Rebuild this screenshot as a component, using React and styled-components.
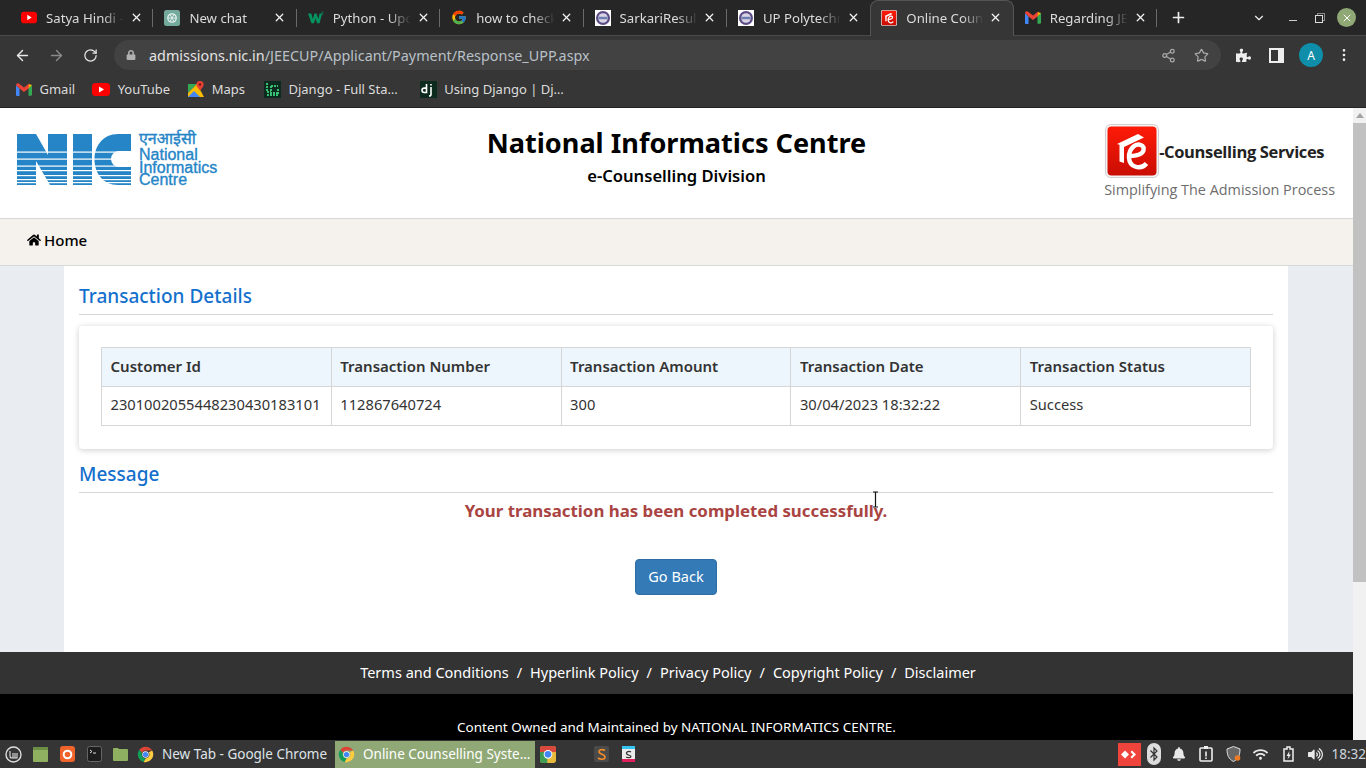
import React from 'react';
import styled, { createGlobalStyle } from 'styled-components';
import { FaHome, FaPuzzlePiece, FaBell, FaLock, FaVolumeUp, FaWifi } from 'react-icons/fa';
import { FcGoogle } from 'react-icons/fc';
import { ArrowLeft, ArrowRight, RotateCw, Share2, Star, MoreVertical, X, Plus, ChevronDown } from 'lucide-react';

const GlobalStyle = createGlobalStyle`
  html, body { margin: 0; padding: 0; height: 100%; overflow: hidden; }
  body { font-family: "Noto Sans", "Open Sans", sans-serif; }
  * { box-sizing: border-box; }
`;

const Screen = styled.div`
  width: 1366px;
  height: 768px;
  display: flex;
  flex-direction: column;
  overflow: hidden;
`;

/* browser chrome */
const TabStrip = styled.div`
  height: 36px;
  background: #262626;
  border-bottom: 1px solid #4a4a4a;
  display: flex;
  align-items: stretch;
  padding-left: 10px;
  color: #dcdcdc;
  font-size: 13.2px;
  flex: none;
`;

const Tab = styled.div`
  width: 143.4px;
  height: ${({ $active }) => ($active ? '36px' : '35px')};
  flex: none;
  display: flex;
  align-items: center;
  padding: ${({ $active }) => ($active ? '0 8px 2px 10px' : '0 8px 0 11px')};
  position: relative;
  background: ${({ $active }) => ($active ? '#363636' : 'transparent')};
  border: ${({ $active }) => ($active ? '1px solid #555' : 'none')};
  border-bottom: none;
  border-radius: 8px 8px 0 0;
  &::after {
    content: '';
    display: ${({ $sep }) => ($sep ? 'block' : 'none')};
    position: absolute;
    right: 0;
    top: 9px;
    height: 18px;
    width: 1px;
    background: #6a6a6a;
  }
`;

const TabIcon = styled.span`
  width: 16px;
  height: 16px;
  flex: none;
  display: flex;
  align-items: center;
  justify-content: center;
`;

const TabTitle = styled.span`
  margin: 0 3px 0 9px;
  flex: 1;
  min-width: 0;
  overflow: hidden;
  white-space: nowrap;
  -webkit-mask-image: linear-gradient(90deg, #000 72%, transparent 100%);
  mask-image: linear-gradient(90deg, #000 72%, transparent 100%);
`;

const TabClose = styled.span`
  width: 18px;
  flex: none;
  display: flex;
  justify-content: center;
  color: #f2f2f2;
`;

const StripAction = styled.span`
  display: flex;
  align-items: center;
  color: #eee;
  margin-left: ${({ $gap }) => $gap}px;
`;

const MinimizeGlyph = styled.span`
  display: block;
  width: 8px;
  height: 1px;
  margin-top: 5px;
  background: #ccc;
`;

const RestoreGlyph = styled.span`
  display: block;
  width: 8px;
  height: 8px;
  margin-top: 2px;
  border: 1px solid #ddd;
  box-shadow: 2px -2px 0 -1px #262626, 2px -2px 0 0 #888;
`;

const CloseDot = styled.span`
  width: 19px;
  height: 19px;
  border-radius: 50%;
  background: #8fa876;
  color: #fff;
  display: flex;
  align-items: center;
  justify-content: center;
`;

const Toolbar = styled.div`
  height: 35px;
  background: #363636;
  display: flex;
  align-items: center;
  padding: 3px 0 0 14px;
  color: #d8d8d8;
  flex: none;
`;

const NavButton = styled.span`
  width: 17px;
  display: flex;
  justify-content: center;
  margin-right: 17px;
  color: ${({ $dim }) => ($dim ? '#8a8a8a' : '#e6e6e6')};
`;

const Omnibox = styled.div`
  width: 1107px;
  height: 30px;
  margin-left: -2px;
  background: #424242;
  border-radius: 15px;
  display: flex;
  align-items: center;
  padding: 0 12px 0 12px;
  font-size: 14.36px;
  color: #b9c0c8;
`;

const UrlHost = styled.span`
  color: #e4e4e4;
`;

const UrlText = styled.span`
  margin-left: 13px;
  flex: 1;
`;

const OmniIcon = styled.span`
  display: flex;
  color: #a8a8a8;
  margin-left: 18px;
`;

const ToolIcons = styled.div`
  display: flex;
  align-items: center;
  color: #eee;
`;

const SidePanelIcon = styled.span`
  display: block;
  width: 15px;
  height: 15px;
  background: #363636;
  border: 2px solid #eee;
  border-right-width: 6px;
`;

const Avatar = styled.span`
  width: 24px;
  height: 24px;
  border-radius: 50%;
  background: #0e8ea8;
  color: #fff;
  font-size: 12px;
  display: flex;
  align-items: center;
  justify-content: center;
`;

const Bookmarks = styled.div`
  height: 37px;
  background: #363636;
  border-bottom: 1px solid #222;
  display: flex;
  align-items: center;
  padding-left: 16px;
  color: #dcdcdc;
  font-size: 13px;
  flex: none;
`;

const Bookmark = styled.span`
  display: flex;
  align-items: center;
  gap: 7.5px;
  margin-right: ${({ $gap }) => $gap}px;
  white-space: nowrap;
`;

/* page */
const Viewport = styled.div`
  flex: 1;
  min-height: 0;
  display: flex;
`;

const Page = styled.div`
  flex: 1;
  min-width: 0;
  display: flex;
  flex-direction: column;
  background: #e9ecf1;
`;

const Scrollbar = styled.div`
  width: 13px;
  flex: none;
  background: #f1f1f1;
  display: flex;
  flex-direction: column;
  align-items: stretch;
  padding-top: 15px;
  position: relative;
  &::before {
    content: '';
    position: absolute;
    top: 5px;
    left: 3px;
    border: 4px solid transparent;
    border-top: 0;
    border-bottom: 5px solid #a3a3a3;
  }
`;

const ScrollThumb = styled.div`
  height: 459px;
  background: #c1c1c1;
`;

const Header = styled.header`
  height: 111px;
  background: #fff;
  border-bottom: 1px solid #d8d8d8;
  display: grid;
  grid-template-columns: 1fr auto 1fr;
  align-items: start;
  flex: none;
`;

const NicLogo = styled.div`
  display: flex;
  padding: 26px 0 0 17px;
  color: #2585c7;
`;

const NicWords = styled.div`
  margin-left: 8px;
  margin-top: -2px;
  font-family: "Liberation Sans", sans-serif;
  font-size: 16px;
  line-height: 12.7px;
  -webkit-text-stroke: 0.35px #2585c7;
`;

const NicHindi = styled.div`
  font-family: "Noto Sans Devanagari", "Noto Sans", sans-serif;
  font-size: 16px;
  line-height: 17px;
`;

const TitleBlock = styled.div`
  text-align: center;
  color: #000;
  padding-top: 15px;
`;

const SiteTitle = styled.h1`
  margin: 0;
  font-size: 27.1px;
  line-height: 40px;
  font-weight: 700;
`;

const SiteSub = styled.div`
  font-size: 16.6px;
  line-height: 26px;
  font-weight: 600;
`;

const ServiceLogo = styled.div`
  justify-self: end;
  padding: 15px 18px 0 0;
  display: flex;
  flex-direction: column;
  align-items: flex-start;
  font-family: "Open Sans", sans-serif;
`;

const ServiceTop = styled.div`
  display: flex;
  align-items: center;
  margin-left: 1px;
  height: 55px;
`;

const ServiceName = styled.span`
  font-size: 16.5px;
  font-weight: 700;
  color: #222;
  letter-spacing: -0.35px;
  margin-top: 2px;
`;

const ServiceTag = styled.span`
  font-size: 14.4px;
  color: #6d6d6d;
  line-height: 20px;
  margin-top: 2px;
  white-space: nowrap;
`;

const NavBar = styled.nav`
  height: 47px;
  background: #f5f1ec;
  border-bottom: 1px solid #d8d8d8;
  display: flex;
  align-items: center;
  padding: 0 0 4px 27px;
  font-size: 15px;
  font-weight: 500;
  color: #000;
  flex: none;
`;

const HomeLink = styled.a`
  display: flex;
  align-items: center;
  gap: 3px;
`;

const Container = styled.main`
  width: 1224px;
  margin-left: 64px;
  flex: 1;
  min-height: 0;
  background: #fff;
  padding: 15px 15px 0;
  color: #333;
`;

const SectionTitle = styled.h2`
  margin: 0;
  font-size: 19px;
  line-height: 31px;
  padding-bottom: 2px;
  font-weight: 500;
  color: #1470cc;
  border-bottom: 1px solid #d6d6d6;
`;

const Card = styled.div`
  margin-top: 11px;
  margin-bottom: 10px;
  padding: 21px 22px 23px;
  background: #fff;
  border-radius: 4px;
  box-shadow: 0 1px 6px rgba(0, 0, 0, 0.2);
`;

const Table = styled.table`
  width: 100%;
  table-layout: fixed;
  border-collapse: collapse;
`;

const Th = styled.th`
  height: 39px;
  padding: 0 8px 2px 8.5px;
  text-align: left;
  font-size: 15px;
  font-weight: 600;
  background: #eef6fd;
  border: 1px solid #d6d6d6;
`;

const Td = styled.td`
  height: 39px;
  padding: 0 8px 5px 8.5px;
  font-size: 14.7px;
  border: 1px solid #d6d6d6;
  white-space: nowrap;
`;

const SuccessText = styled.p`
  margin: 6px 0 0;
  text-align: center;
  font-size: 16.85px;
  line-height: 24px;
  font-weight: 700;
  color: #a94442;
`;

const ButtonRow = styled.div`
  display: flex;
  justify-content: center;
  margin-top: 36px;
`;

const GoBack = styled.button`
  width: 82px;
  height: 36px;
  padding: 0 0 2px;
  background: #337ab7;
  border: 1px solid #2e6da4;
  border-radius: 4px;
  color: #fff;
  font: 400 14.5px "Noto Sans", sans-serif;
`;

const Cursor = styled.span`
  position: absolute;
  left: 872px;
  top: 491px;
  width: 7px;
  height: 17px;
  display: block;
`;

const FooterLinks = styled.div`
  height: 42px;
  padding: 0 17px 2px 0;
  background: #333;
  color: #fff;
  display: flex;
  justify-content: center;
  align-items: center;
  font-size: 14.5px;
  flex: none;
`;

const FooterSep = styled.span`
  margin: 0 8px;
`;

const FooterOwner = styled.div`
  height: 46px;
  background: #000;
  color: #fff;
  text-align: center;
  font-size: 13.46px;
  padding-top: 24px;
  line-height: 18px;
  flex: none;
`;

/* desktop panel */
const Taskbar = styled.div`
  height: 28px;
  background: #353535;
  display: flex;
  align-items: center;
  color: #dfe3e8;
  font-size: 13.5px;
  flex: none;
`;

const PanelSlot = styled.span`
  width: ${({ $w }) => $w}px;
  height: 28px;
  flex: none;
  display: flex;
  align-items: center;
  justify-content: center;
`;

const TaskWindow = styled.div`
  width: ${({ $w }) => $w}px;
  height: 27px;
  flex: none;
  display: flex;
  align-items: center;
  padding-left: 3px;
  gap: 8px;
  white-space: nowrap;
  overflow: hidden;
  background: ${({ $active }) => ($active ? '#8fa876' : 'transparent')};
  color: ${({ $active }) => ($active ? '#fff' : '#dfe3e8')};
`;

const PanelSpacer = styled.div`
  flex: 1;
`;

const TrayIcon = styled.span`
  width: ${({ $w }) => $w}px;
  flex: none;
  display: flex;
  justify-content: center;
  color: #e8e8e8;
`;

const Clock = styled.span`
  margin-left: 3px;
  color: #cfd6dd;
  font-size: 13.5px;
`;

const ChromeIcon = ({ size = 16 }) => (
  <svg width={size} height={size} viewBox="0 0 48 48">
    <path fill="#db4437" d="M24 2a22 22 0 0 1 19 11H24a11 11 0 0 0-10 6.5L6.6 10.5A22 22 0 0 1 24 2z" />
    <path fill="#0f9d58" d="M6.6 10.500 14 19.500A11 11 0 0 0 24.500 35l-5.500 10A22 22 0 0 1 6.600 10.500z" />
    <path fill="#ffcd40" d="M43 13a22 22 0 0 1-24 32l5.500-10A11 11 0 0 0 33 17.500L43 13z" />
    <circle cx="24" cy="24" r="9" fill="#fff" />
    <circle cx="24" cy="24" r="7.400" fill="#4285f4" />
  </svg>
);

const ChromeTile = () => (
  <svg width="16" height="17" viewBox="0 0 48 51">
    <rect width="48" height="51" rx="8" fill="#e8b93a" />
    <path d="M0 8a8 8 0 0 1 8-8h32a8 8 0 0 1 8 8v10H0z" fill="#d9493c" />
    <path d="M0 18h22v33H8a8 8 0 0 1-8-8z" fill="#3f9d55" />
    <circle cx="24" cy="25" r="13" fill="#fff" />
    <circle cx="24" cy="25" r="10" fill="#4285f4" />
  </svg>
);

const YoutubeIcon = () => (
  <svg width="18" height="13" viewBox="0 0 18 13">
    <rect width="18" height="13" rx="3.500" fill="#f00" />
    <path d="M7 3.500v6l5-3z" fill="#fff" />
  </svg>
);

const GmailIcon = () => (
  <svg width="16" height="13" viewBox="0 0 16 13">
    <path d="M0 2v9.500A1.200 1.200 0 0 0 1.200 13H3.500V5.500z" fill="#4285f4" />
    <path d="M16 2v9.500a1.200 1.200 0 0 1-1.200 1.200h-2.300V5.500z" fill="#34a853" />
    <path d="M12.500 1 16 2v0l-3.500 3.500L11 4z" fill="#fbbc04" />
    <path d="M0 2C0 .5 1.600-.4 2.800.5L8 4.600 13.200.5 12.500 5.500 8 9 3.500 5.500z" fill="#ea4335" />
  </svg>
);

const ChatGptIcon = () => (
  <svg width="16" height="16" viewBox="0 0 16 16">
    <rect width="16" height="16" rx="2.500" fill="#74aa9c" />
    <circle cx="8" cy="8" r="4.200" fill="none" stroke="#e8f3f0" strokeWidth="1.300" />
    <path d="M6 4.500 10 11.500M10 4.500 6 11.500M4 8h8" stroke="#e8f3f0" strokeWidth=".9" />
  </svg>
);

const W3Icon = () => (
  <svg width="18" height="14" viewBox="0 0 18 14">
    <path d="M0 2h3.800l1.600 6L7.300 2h2.300l2 6 1.400-6h2.800l-2.800 11h-2.800L8.400 7.500 6.700 13H3.900z" fill="#04925f" />
    <path d="M15 .5h2.200l-1 1.200c1.200.3.800 2-.8 1.600" fill="none" stroke="#04925f" strokeWidth=".7" />
  </svg>
);

const SealIcon = () => (
  <svg width="16" height="16" viewBox="0 0 16 16">
    <rect width="16" height="16" fill="#fff" />
    <circle cx="8" cy="8" r="7" fill="#5b4a86" />
    <circle cx="8" cy="8" r="4.800" fill="#d8d4e4" />
    <rect x="3.600" y="6.800" width="8.800" height="2.400" fill="#6c7fb0" />
  </svg>
);

const CounsellingMark = ({ size = 16, gradientId = 'mark-red' }) => (
  <svg width={size} height={size} viewBox="0 0 54 54">
    <defs>
      <linearGradient id={gradientId} x1="0" y1="0" x2="0" y2="1">
        <stop offset="0" stopColor="#ff1a08" />
        <stop offset="1" stopColor="#c90d03" />
      </linearGradient>
    </defs>
    <rect x=".5" y=".5" width="53" height="53" rx="5" fill="#f3f3f3" stroke="#d0d0d0" />
    <rect x="2.500" y="2.500" width="49" height="49" rx="4" fill={`url(#${gradientId})`} />
    <path d="M12 20 33 10l6 3.500L19 23v16l-4.500-1.500V20.800z" fill="#fff" />
    <path d="M23 31c5 2 14 0 15.500-4.500C40 21 33 18.500 28.500 22.500 22 28 22.500 40 30 42.500c4.500 1.500 9 0 11.500-3" fill="none" stroke="#fff" strokeWidth="4.400" />
  </svg>
);

const DjangoSquare = () => (
  <svg width="17" height="17" viewBox="0 0 17 17">
    <rect width="17" height="17" fill="#0c2a1e" />
    <path d="M3 2v9h4M7 5h7M7 5v7h7M14 8v6H3" fill="none" stroke="#38c172" strokeWidth="2" strokeDasharray="2 1" />
  </svg>
);

const DjIcon = () => (
  <svg width="17" height="17" viewBox="0 0 17 17">
    <rect width="17" height="17" fill="#0c2a1e" />
    <path d="M6.500 3v8.500H4.200a2.200 2.200 0 0 1 0-4.400H6.500M11 6v7.500c0 1-.7 1.500-2 1.500M11 3v1.500" fill="none" stroke="#fff" strokeWidth="1.600" />
  </svg>
);

const MapsIcon = () => (
  <svg width="16" height="16" viewBox="0 0 16 16">
    <path d="M0 3h9l-9 9z" fill="#34a853" />
    <path d="M0 12 9 3l7 13H0z" fill="#fbbc04" />
    <path d="M0 16l6-6 6 6z" fill="#4285f4" />
    <path d="M12 0a3.600 3.600 0 0 1 3.600 3.600C15.600 6 12 9.500 12 9.500S8.400 6 8.400 3.600A3.600 3.600 0 0 1 12 0z" fill="#ea4335" />
    <circle cx="12" cy="3.600" r="1.300" fill="#7b1c14" />
  </svg>
);

const NicMark = () => (
  <svg width="114" height="51" viewBox="0 0 114 51">
    <path d="M0 0h19l12 21V0h19v51H33L19 27v24H0z" fill="#2585c7" />
    <rect x="56" y="0" width="19" height="51" fill="#2585c7" />
    <path d="M114 0H101C86 0 77.500 12 77.500 25.500S86 51 101 51h13V33H102a7.500 7.500 0 0 1 0-16h12z" fill="#2585c7" />
    {[17.500, 24.500, 31.500, 36, 41, 45, 48].map((y) => (
      <rect key={y} x="0" y={y} width="114" height="1.200" fill="#fff" />
    ))}
  </svg>
);

const tabs = [
  { title: 'Satya Hindi - YouTube', icon: <YoutubeIcon />, sep: true },
  { title: 'New chat', icon: <ChatGptIcon />, sep: true },
  { title: 'Python - Update', icon: <W3Icon />, sep: true },
  { title: 'how to check', icon: <FcGoogle size={17} />, sep: true },
  { title: 'SarkariResult', icon: <SealIcon />, sep: true },
  { title: 'UP Polytechnic', icon: <SealIcon /> },
  { title: 'Online Counselling', icon: <CounsellingMark gradientId="tab-red" />, active: true },
  { title: 'Regarding JEE', icon: <GmailIcon />, sep: true },
];

const bookmarks = [
  { label: 'Gmail', icon: <GmailIcon />, gap: 17 },
  { label: 'YouTube', icon: <YoutubeIcon />, gap: 18 },
  { label: 'Maps', icon: <MapsIcon />, gap: 19 },
  { label: 'Django - Full Sta…', icon: <DjangoSquare />, gap: 22 },
  { label: 'Using Django | Dj…', icon: <DjIcon />, gap: 0 },
];

const columns = ['Customer Id', 'Transaction Number', 'Transaction Amount', 'Transaction Date', 'Transaction Status'];
const values = ['2301002055448230430183101', '112867640724', '300', '30/04/2023 18:32:22', 'Success'];
const footerLinks = ['Terms and Conditions', 'Hyperlink Policy', 'Privacy Policy', 'Copyright Policy', 'Disclaimer'];

const App = () => {
  return (
    <Screen>
      <GlobalStyle />
      <TabStrip>
        {tabs.map((tab) => (
          <Tab key={tab.title} $active={tab.active} $sep={tab.sep}>
            <TabIcon>{tab.icon}</TabIcon>
            <TabTitle>{tab.title}</TabTitle>
            <TabClose><X size={13} strokeWidth={2.4} /></TabClose>
          </Tab>
        ))}
        <StripAction $gap={13}><Plus size={17} strokeWidth={2.4} /></StripAction>
        <StripAction $gap={65}><ChevronDown size={14} /></StripAction>
        <StripAction $gap={23}><MinimizeGlyph /></StripAction>
        <StripAction $gap={18}><RestoreGlyph /></StripAction>
        <StripAction $gap={14}><CloseDot><X size={12} /></CloseDot></StripAction>
      </TabStrip>

      <Toolbar>
        <NavButton><ArrowLeft size={17} /></NavButton>
        <NavButton $dim><ArrowRight size={17} /></NavButton>
        <NavButton><RotateCw size={15} /></NavButton>
        <Omnibox>
          <FaLock size={10} color="#b0b0b0" />
          <UrlText><UrlHost>admissions.nic.in</UrlHost>/JEECUP/Applicant/Payment/Response_UPP.aspx</UrlText>
          <OmniIcon><Share2 size={15} /></OmniIcon>
          <OmniIcon><Star size={15} /></OmniIcon>
        </Omnibox>
        <ToolIcons>
          <StripAction $gap={15}><FaPuzzlePiece size={15} /></StripAction>
          <StripAction $gap={18}><SidePanelIcon /></StripAction>
          <StripAction $gap={15}><Avatar>A</Avatar></StripAction>
          <StripAction $gap={13}><MoreVertical size={16} /></StripAction>
        </ToolIcons>
      </Toolbar>

      <Bookmarks>
        {bookmarks.map((mark) => (
          <Bookmark key={mark.label} $gap={mark.gap}>{mark.icon}{mark.label}</Bookmark>
        ))}
      </Bookmarks>

      <Viewport>
        <Page>
          <Header>
            <NicLogo>
              <NicMark />
              <NicWords>
                <NicHindi>एनआईसी</NicHindi>
                National<br />Informatics<br />Centre
              </NicWords>
            </NicLogo>
            <TitleBlock>
              <SiteTitle>National Informatics Centre</SiteTitle>
              <SiteSub>e-Counselling Division</SiteSub>
            </TitleBlock>
            <ServiceLogo>
              <ServiceTop>
                <CounsellingMark size={54} gradientId="head-red" />
                <ServiceName>-Counselling Services</ServiceName>
              </ServiceTop>
              <ServiceTag>Simplifying The Admission Process</ServiceTag>
            </ServiceLogo>
          </Header>

          <NavBar>
            <HomeLink><FaHome size={14} />Home</HomeLink>
          </NavBar>

          <Container>
            <SectionTitle>Transaction Details</SectionTitle>
            <Card>
              <Table>
                <thead>
                  <tr>{columns.map((col) => <Th key={col}>{col}</Th>)}</tr>
                </thead>
                <tbody>
                  <tr>{values.map((val) => <Td key={val}>{val}</Td>)}</tr>
                </tbody>
              </Table>
            </Card>
            <SectionTitle>Message</SectionTitle>
            <SuccessText>Your transaction has been completed successfully.</SuccessText>
            <ButtonRow><GoBack>Go Back</GoBack></ButtonRow>
          </Container>

          <FooterLinks>
            {footerLinks.map((link, index) => (
              <React.Fragment key={link}>
                {index > 0 && <FooterSep>/</FooterSep>}
                <span>{link}</span>
              </React.Fragment>
            ))}
          </FooterLinks>
          <FooterOwner>Content Owned and Maintained by NATIONAL INFORMATICS CENTRE.</FooterOwner>
        </Page>
        <Scrollbar><ScrollThumb /></Scrollbar>
      </Viewport>

      <Taskbar>
        <PanelSlot $w={27}>
          <svg width="17" height="17" viewBox="0 0 17 17">
            <circle cx="8.500" cy="8.500" r="7.500" fill="none" stroke="#ddd" strokeWidth="1.400" />
            <path d="M5 5v5a2 2 0 0 0 2 2h5V7M8 12V7M10 7v5" fill="none" stroke="#ddd" strokeWidth="1.100" />
          </svg>
        </PanelSlot>
        <PanelSlot $w={26}>
          <svg width="15" height="15" viewBox="0 0 15 15"><rect width="15" height="15" rx="1" fill="#8fb060" /><rect width="15" height="3" fill="#6d8f45" /></svg>
        </PanelSlot>
        <PanelSlot $w={28}>
          <svg width="15" height="16" viewBox="0 0 15 16"><rect width="15" height="16" rx="3" fill="#f0642c" /><circle cx="7.500" cy="8.500" r="3.800" fill="none" stroke="#fff" strokeWidth="2" /></svg>
        </PanelSlot>
        <PanelSlot $w={26}>
          <svg width="15" height="16" viewBox="0 0 15 16"><rect x=".5" y=".5" width="14" height="15" rx="2" fill="#1d1d1d" stroke="#666" /><path d="M3 4l2 1.500L3 7M6 7h3" stroke="#ddd" fill="none" /></svg>
        </PanelSlot>
        <PanelSlot $w={27}>
          <svg width="15" height="14" viewBox="0 0 15 14"><path d="M0 2a1 1 0 0 1 1-1h4l1 1h8a1 1 0 0 1 1 1v10a1 1 0 0 1-1 1H1a1 1 0 0 1-1-1z" fill="#8fb060" /></svg>
        </PanelSlot>
        <TaskWindow $w={201}>
          <ChromeIcon size={17} /><span>New Tab - Google Chrome</span>
        </TaskWindow>
        <TaskWindow $active $w={200}>
          <ChromeIcon size={17} /><span>Online Counselling Syste…</span>
        </TaskWindow>
        <PanelSlot $w={26}><ChromeTile /></PanelSlot>
        <PanelSlot $w={27} />
        <PanelSlot $w={27}>
          <svg width="15" height="16" viewBox="0 0 15 16"><rect width="15" height="16" rx="2" fill="#4a4a4a" /><path d="M11 4.500C9 3 4.500 3.500 5 6s6 2 6 5-5 2.500-7 1" fill="none" stroke="#f28c28" strokeWidth="1.600" /></svg>
        </PanelSlot>
        <PanelSlot $w={26}>
          <svg width="13" height="16" viewBox="0 0 13 16"><rect width="13" height="16" rx="1.500" fill="#ececec" /><rect width="13" height="3" fill="#36c5f0" /><rect y="13" width="13" height="3" fill="#e01e5a" /><path d="M9 6C7.500 5 4 5.500 4.500 7.500S9 9 9 10.500 5.500 12 4 11" fill="none" stroke="#333" strokeWidth="1.200" /></svg>
        </PanelSlot>
        <PanelSpacer />
        <TrayIcon $w={24}>
          <svg width="23" height="23" viewBox="0 0 23 23"><rect width="23" height="23" fill="#ef443b" /><path d="M7 7.500 11 11.500 7 15.500 3 11.500zM14 7.500 18 11.500 14 15.500 12.500 14 15 11.500 12.500 9z" fill="#fff" /></svg>
        </TrayIcon>
        <TrayIcon $w={25}>
          <svg width="14" height="22" viewBox="0 0 14 22"><rect width="14" height="22" rx="7" fill="#dcdcdc" /><path d="M3.500 7.500 10 14l-3 3V5l3 3-6.500 6.500" fill="none" stroke="#353535" strokeWidth="1.200" /></svg>
        </TrayIcon>
        <TrayIcon $w={26}><FaBell size={14} /></TrayIcon>
        <TrayIcon $w={28}>
          <svg width="14" height="16" viewBox="0 0 14 16"><rect x="1" y="2" width="12" height="13" rx="1" fill="none" stroke="#eee" strokeWidth="1.600" /><rect x="5" y="0" width="4" height="3" fill="#eee" /><path d="M7 5.500v5M7 11.500v1.500" stroke="#eee" strokeWidth="1.600" /></svg>
        </TrayIcon>
        <TrayIcon $w={27}>
          <svg width="15" height="16" viewBox="0 0 15 16"><path d="M7.500.5 14 3c0 6-1.500 10-6.500 12.500C2.500 13 1 9 1 3z" fill="#666" stroke="#ddd" /><circle cx="11.500" cy="12" r="2.800" fill="#f07a26" /></svg>
        </TrayIcon>
        <TrayIcon $w={27}><FaWifi size={15} /></TrayIcon>
        <TrayIcon $w={28}>
          <svg width="13" height="16" viewBox="0 0 13 16"><path d="M2 3h3V1h3v2h3v12H2z" fill="none" stroke="#eee" strokeWidth="1.500" /><path d="M7.500 5 4.500 10h2l-1 3.500 3.500-5H7z" fill="#eee" /></svg>
        </TrayIcon>
        <TrayIcon $w={26}><FaVolumeUp size={15} /></TrayIcon>
        <Clock>18:32</Clock>
      </Taskbar>
      <Cursor>
        <svg width="7" height="17" viewBox="0 0 7 17"><path d="M1 1h5M3.500 1v15M1 16h5" stroke="#111" strokeWidth="1.200" fill="none" /></svg>
      </Cursor>
    </Screen>
  );
};

export default App;
